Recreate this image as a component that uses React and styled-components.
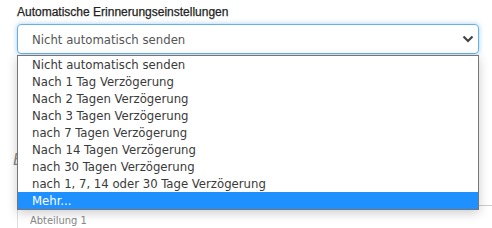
import React from "react";
import styled, { createGlobalStyle } from "styled-components";

const GlobalStyle = createGlobalStyle`
  body {
    margin: 0;
    background: #fff;
    font-family: "Liberation Sans", Arial, sans-serif;
  }
`;

const options = [
  "Nicht automatisch senden",
  "Nach 1 Tag Verzögerung",
  "Nach 2 Tagen Verzögerung",
  "Nach 3 Tagen Verzögerung",
  "nach 7 Tagen Verzögerung",
  "Nach 14 Tagen Verzögerung",
  "nach 30 Tagen Verzögerung",
  "nach 1, 7, 14 oder 30 Tage Verzögerung",
  "Mehr...",
];

function App() {
  return (
    <>
      <GlobalStyle />
      <Page>
        <Label>Automatische Erinnerungseinstellungen</Label>
        <SelectWrap>
          <SelectBox>
            <span>Nicht automatisch senden</span>
            <svg width="12" height="8" viewBox="0 0 12 8">
              <path
                d="M1.5 1.5 L6 6 L10.5 1.5"
                fill="none"
                stroke="#444"
                strokeWidth="2.2"
              />
            </svg>
          </SelectBox>
          <OptionList>
            {options.map((o, i) => (
              <Option key={o} active={i === options.length - 1}>
                {o}
              </Option>
            ))}
          </OptionList>
        </SelectWrap>
        <Heading>Beschreibung</Heading>
        <Panel>
          <small>Abteilung 1</small>
        </Panel>
      </Page>
    </>
  );
}

export default App;

const Page = styled.div`
  padding: 4px 13px 0 17px;
  height: 228px;
  box-sizing: border-box;
  overflow: hidden;
`;

const Label = styled.div`
  font-size: 12px;
  font-weight: normal;
  color: #222;
  height: 20px;
  line-height: 16px;
  -webkit-text-stroke: 0.25px #222;
`;

const SelectWrap = styled.div`
  position: relative;
`;

const SelectBox = styled.div`
  height: 30px;
  box-sizing: border-box;
  border: 1px solid #66afe9;
  border-radius: 4px;
  box-shadow: 0 0 5px rgba(102, 175, 233, 0.6);
  display: flex;
  align-items: center;
  justify-content: space-between;
  padding: 0 4px 0 14px;
  span {
    font-family: "DejaVu Sans Condensed", "DejaVu Sans", Verdana, sans-serif;
    font-size: 13px;
    color: #555;
  }
`;

const OptionList = styled.ul`
  position: absolute;
  top: 31px;
  left: 0;
  right: 0;
  margin: 0;
  padding: 0;
  list-style: none;
  background: #fff;
  border: 1px solid #767676;
  box-shadow: 0 3px 10px rgba(0, 0, 0, 0.2);
  z-index: 2;
`;

const Option = styled.li`
  height: 17px;
  line-height: 17px;
  padding-left: 14px;
  font-family: "DejaVu Sans Condensed", "DejaVu Sans", Verdana, sans-serif;
  font-size: 13px;
  color: ${(p) => (p.active ? "#fff" : "#3a3a3a")};
  background: ${(p) => (p.active ? "#1e90ff" : "transparent")};
  white-space: nowrap;
`;

const Heading = styled.h3`
  margin: 97px 0 0 -4px;
  font-size: 16px;
  font-style: italic;
  font-weight: normal;
  color: #888;
  height: 54px;
`;

const Panel = styled.div`
  margin-right: -20px;
  border-top: 1px solid #ccc;
  border-left: 1px solid #ddd;
  padding: 4px 12px;
  small {
    font-size: 11px;
    color: #888;
    font-family: "DejaVu Sans Condensed", "DejaVu Sans", Verdana, sans-serif;
  }
`;
